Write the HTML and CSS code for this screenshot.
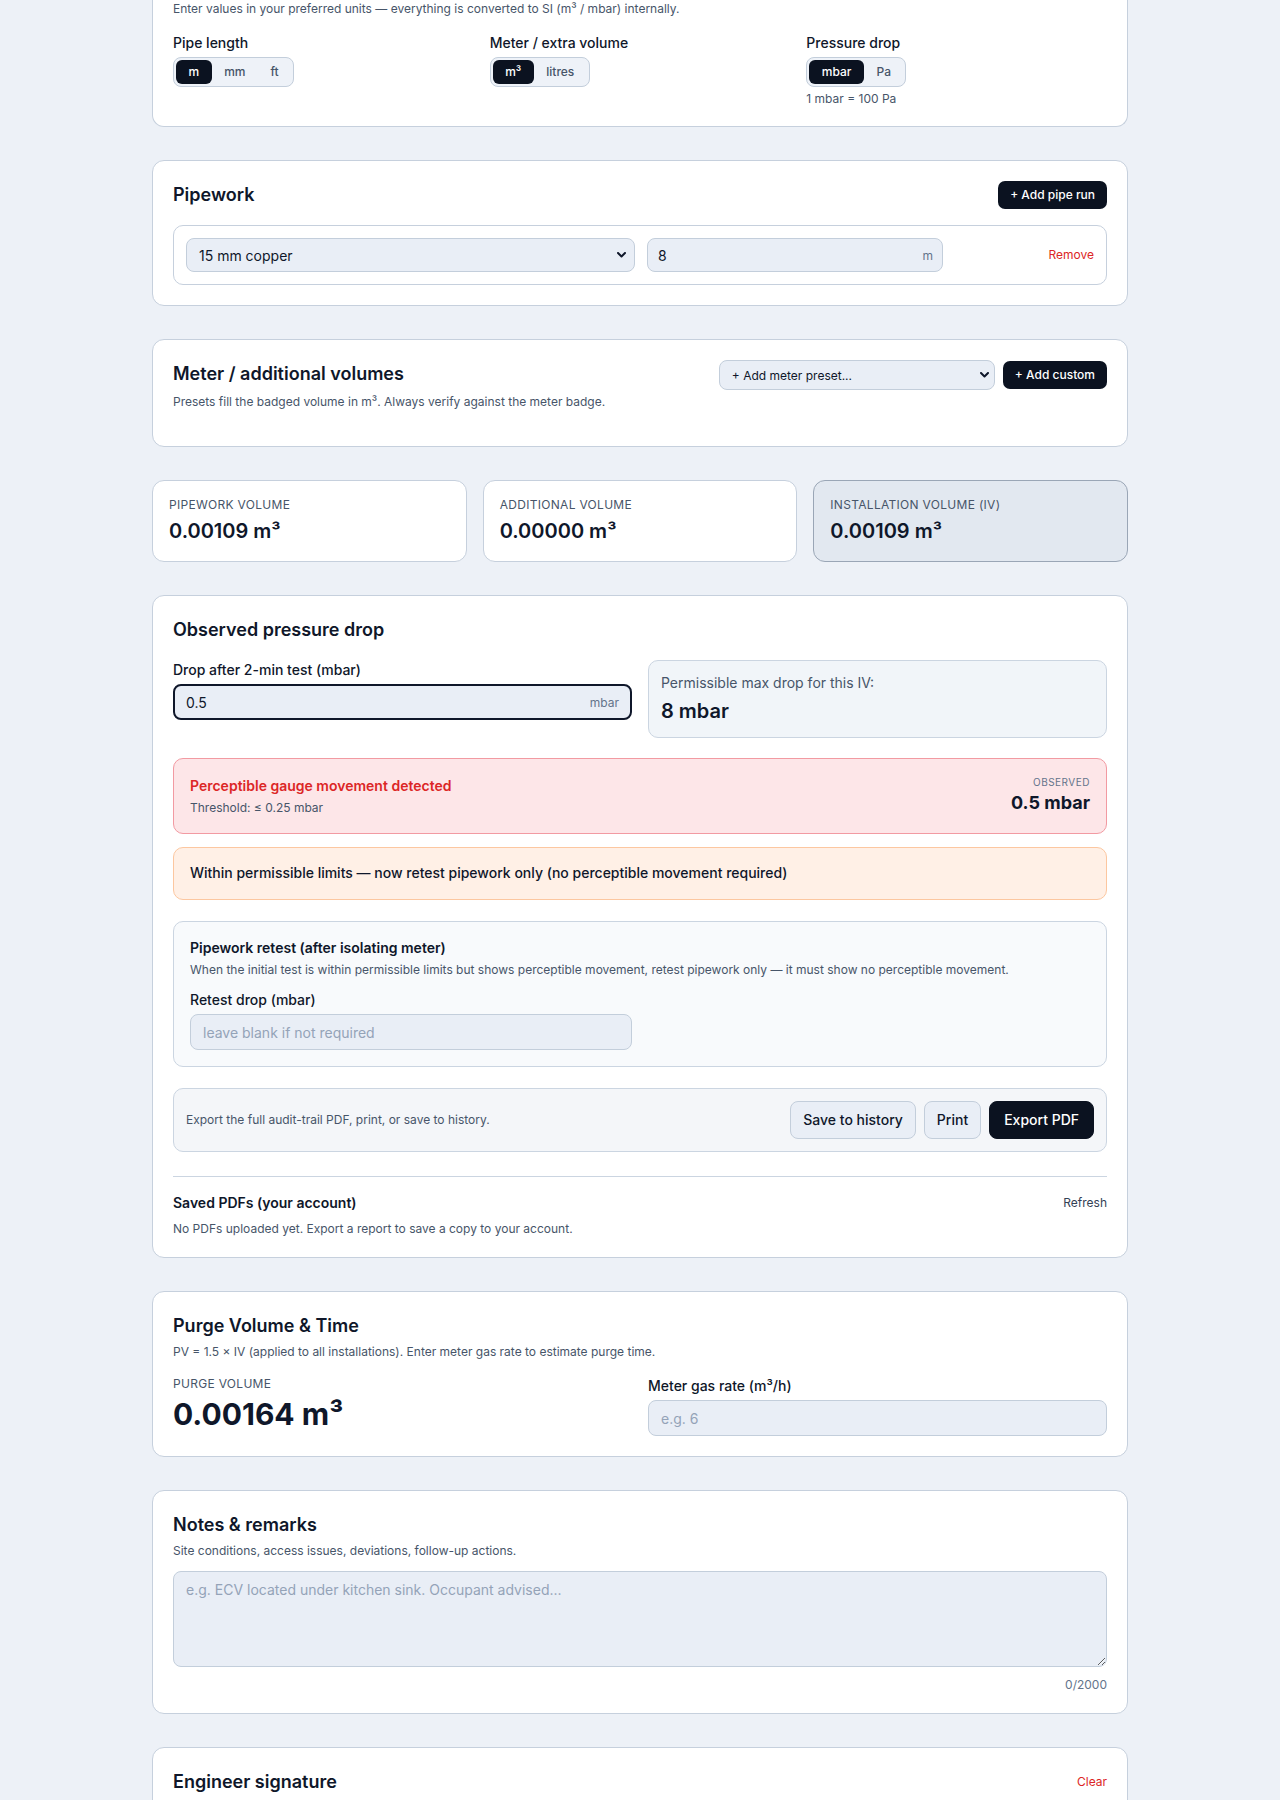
FILE: index.html
```html
<!DOCTYPE html>
<html lang="en">
<head>
<meta charset="utf-8">
<title>Gas tightness test</title>
<link rel="stylesheet" href="styles.css">
</head>
<body>
<main class="page">

  <!-- Units (continued from above the fold) -->
  <section class="card card--cut">
    <p class="note note--flush">Enter values in your preferred units — everything is converted to SI (m³ / mbar) internally.</p>
    <div class="unit-grid">
      <div>
        <span class="field-label">Pipe length</span>
        <div class="seg">
          <button class="seg-btn is-active">m</button>
          <button class="seg-btn">mm</button>
          <button class="seg-btn">ft</button>
        </div>
      </div>
      <div>
        <span class="field-label">Meter / extra volume</span>
        <div class="seg">
          <button class="seg-btn is-active">m³</button>
          <button class="seg-btn">litres</button>
        </div>
      </div>
      <div>
        <span class="field-label">Pressure drop</span>
        <div class="seg">
          <button class="seg-btn is-active">mbar</button>
          <button class="seg-btn">Pa</button>
        </div>
        <p class="hint">1 mbar = 100 Pa</p>
      </div>
    </div>
  </section>

  <!-- Pipework runs -->
  <section class="card">
    <div class="card-head">
      <h2 class="title">Pipework</h2>
      <button class="btn-dark-sm">+ Add pipe run</button>
    </div>
    <div class="pipe-row">
      <div class="select-shell">
        <select class="control control--select">
          <option>15 mm copper</option>
          <option>22 mm copper</option>
          <option>28 mm copper</option>
        </select>
        <svg class="chevron" width="9" height="6" viewBox="0 0 9 6" aria-hidden="true"><path d="M1 1l3.5 3.5L8 1" fill="none" stroke="#0f172a" stroke-width="2" stroke-linecap="round" stroke-linejoin="round"/></svg>
      </div>
      <label class="input-shell">
        <input type="text" value="8">
        <span class="suffix">m</span>
      </label>
      <button class="link-danger">Remove</button>
    </div>
  </section>

  <!-- Meter / additional volumes -->
  <section class="card">
    <div class="card-head card-head--top">
      <div>
        <h2 class="title">Meter / additional volumes</h2>
        <p class="note note--loose">Presets fill the badged volume in m³. Always verify against the meter badge.</p>
      </div>
      <div class="head-actions">
        <div class="select-shell select-shell--sm">
          <select class="control control--sm">
            <option>+ Add meter preset...</option>
            <option>U6 / G4 meter</option>
            <option>U16 / G10 meter</option>
          </select>
          <svg class="chevron chevron--sm" width="9" height="6" viewBox="0 0 9 6" aria-hidden="true"><path d="M1 1l3.5 3.5L8 1" fill="none" stroke="#0f172a" stroke-width="2" stroke-linecap="round" stroke-linejoin="round"/></svg>
        </div>
        <button class="btn-dark-sm">+ Add custom</button>
      </div>
    </div>
    <div class="volume-list"></div>
  </section>

  <!-- Volume totals -->
  <section class="stats">
    <div class="stat">
      <div class="stat-label">Pipework volume</div>
      <div class="stat-value">0.00109 m³</div>
    </div>
    <div class="stat">
      <div class="stat-label">Additional volume</div>
      <div class="stat-value">0.00000 m³</div>
    </div>
    <div class="stat stat--total">
      <div class="stat-label">Installation volume (IV)</div>
      <div class="stat-value">0.00109 m³</div>
    </div>
  </section>

  <!-- Observed pressure drop -->
  <section class="card">
    <h2 class="title">Observed pressure drop</h2>
    <div class="two-col two-col--gap">
      <div>
        <span class="field-label">Drop after 2-min test (mbar)</span>
        <label class="input-shell input-shell--lg input-shell--focus">
          <input type="text" value="0.5">
          <span class="suffix">mbar</span>
        </label>
      </div>
      <div class="limit-box">
        <div class="limit-label">Permissible max drop for this IV:</div>
        <div class="limit-value">8 mbar</div>
      </div>
    </div>

    <div class="alert alert--fail">
      <div>
        <div class="alert-title">Perceptible gauge movement detected</div>
        <div class="alert-sub">Threshold: ≤ 0.25 mbar</div>
      </div>
      <div class="alert-side">
        <div class="alert-kicker">Observed</div>
        <div class="alert-value">0.5 mbar</div>
      </div>
    </div>

    <div class="alert alert--warn">Within permissible limits — now retest pipework only (no perceptible movement required)</div>

    <div class="panel">
      <div class="panel-title">Pipework retest (after isolating meter)</div>
      <p class="note">When the initial test is within permissible limits but shows perceptible movement, retest pipework only — it must show no perceptible movement.</p>
      <div class="two-col two-col--mt12">
        <div>
          <span class="field-label">Retest drop (mbar)</span>
          <input class="control control--lg" type="text" placeholder="leave blank if not required">
        </div>
      </div>
    </div>

    <div class="export-bar">
      <span class="export-text">Export the full audit-trail PDF, print, or save to history.</span>
      <div class="export-actions">
        <button class="btn btn-light">Save to history</button>
        <button class="btn btn-light">Print</button>
        <button class="btn btn-primary">Export PDF</button>
      </div>
    </div>

    <div class="saved">
      <div class="saved-head">
        <span class="saved-title">Saved PDFs (your account)</span>
        <button class="link-plain">Refresh</button>
      </div>
      <p class="note note--gap8">No PDFs uploaded yet. Export a report to save a copy to your account.</p>
    </div>
  </section>

  <!-- Purge -->
  <section class="card">
    <h2 class="title">Purge Volume &amp; Time</h2>
    <p class="note">PV = 1.5 × IV (applied to all installations). Enter meter gas rate to estimate purge time.</p>
    <div class="two-col two-col--gap16">
      <div>
        <div class="stat-label">Purge volume</div>
        <div class="purge-value">0.00164 m³</div>
      </div>
      <div>
        <span class="field-label">Meter gas rate (m³/h)</span>
        <input class="control control--lg" type="text" placeholder="e.g. 6">
      </div>
    </div>
  </section>

  <!-- Notes -->
  <section class="card">
    <h2 class="title">Notes &amp; remarks</h2>
    <p class="note">Site conditions, access issues, deviations, follow-up actions.</p>
    <textarea class="notes" placeholder="e.g. ECV located under kitchen sink. Occupant advised..."></textarea>
    <div class="counter">0/2000</div>
  </section>

  <!-- Signature -->
  <section class="card">
    <div class="card-head">
      <h2 class="title">Engineer signature</h2>
      <button class="link-danger">Clear</button>
    </div>
    <div class="sig-pad"></div>
  </section>

</main>
</body>
</html>
```
FILE: styles.css
```css
:root {
  --bg: #edf1f7;
  --ink: #0f172a;
  --muted: #475569;
  --soft: #64748b;
  --line: #c6d0dd;
  --field: #e9eef6;
  --field-line: #c3cedb;
  --dark: #0b1220;
  --red: #dc2626;
}

* { box-sizing: border-box; }

body {
  margin: 0;
  background: var(--bg);
  color: var(--ink);
  font-family: Inter, "Noto Sans", "Liberation Sans", sans-serif;
}

button, input, select, textarea { font-family: inherit; color: inherit; }
button { cursor: pointer; }

.page {
  max-width: 976px;
  margin: 0 auto;
  padding-bottom: 48px;
  display: flex;
  flex-direction: column;
  gap: 33px;
}

/* cards */
.card {
  background: #fff;
  border: 1px solid var(--line);
  border-radius: 12px;
  padding: 20px;
}
.card--cut {
  border-top: 0;
  border-radius: 0 0 12px 12px;
  padding-top: 1px;
  padding-bottom: 19px;
}

.title {
  margin: 0;
  font-size: 18px;
  line-height: 28px;
  font-weight: 600;
}

.note {
  margin: 4px 0 0;
  font-size: 12px;
  line-height: 16px;
  color: var(--muted);
}
.note--flush { margin-top: 0; }
.note--loose { margin-top: 6px; }
.note--gap8 { margin-top: 8px; }

.card-head {
  display: flex;
  justify-content: space-between;
  align-items: center;
}
.card-head--top { align-items: flex-start; }

.head-actions {
  display: flex;
  align-items: center;
  gap: 8px;
}

.field-label {
  display: block;
  font-size: 14px;
  line-height: 20px;
  font-weight: 500;
}

/* unit toggles */
.unit-grid {
  margin-top: 16px;
  display: grid;
  grid-template-columns: repeat(3, 1fr);
  gap: 16px;
}

.seg {
  display: inline-flex;
  margin-top: 4px;
  padding: 2px;
  border: 1px solid var(--field-line);
  background: #eef2f8;
  border-radius: 8px;
}
.seg-btn {
  border: 0;
  background: transparent;
  color: var(--muted);
  font-size: 12px;
  line-height: 16px;
  font-weight: 500;
  padding: 4px 12.5px;
  border-radius: 6px;
}
.seg-btn.is-active {
  background: var(--dark);
  color: #fff;
}

.hint {
  margin: 4px 0 0;
  font-size: 12px;
  line-height: 16px;
  color: var(--muted);
}

/* buttons */
.btn-dark-sm {
  border: 0;
  background: var(--dark);
  color: #fff;
  font-size: 12px;
  line-height: 16px;
  font-weight: 500;
  padding: 6px 12px;
  border-radius: 7px;
}

.btn {
  font-size: 14px;
  line-height: 20px;
  font-weight: 500;
  padding: 8px 12px;
  border-radius: 8px;
  border: 1px solid var(--field-line);
}
.btn-light { background: var(--field); color: var(--ink); }
.btn-primary {
  background: var(--dark);
  border-color: var(--dark);
  color: #fff;
  padding: 8px 14px;
}

.link-danger {
  border: 0;
  background: none;
  padding: 0;
  color: var(--red);
  font-size: 12px;
  line-height: 16px;
  justify-self: end;
}
.link-plain {
  border: 0;
  background: none;
  padding: 0;
  font-size: 12px;
  line-height: 16px;
  color: #334155;
}

/* form controls */
.control {
  width: 100%;
  height: 34px;
  padding: 0 12px;
  border: 1px solid var(--field-line);
  background-color: var(--field);
  border-radius: 8px;
  font-size: 14px;
  color: var(--ink);
  outline: none;
}
.control::placeholder { color: #94a3b8; }
.control--lg {
  height: 36px;
  margin-top: 4px;
}

/* selects draw their own chevron on top of the field */
.select-shell {
  position: relative;
}
.select-shell select {
  appearance: none;
  -webkit-appearance: none;
  display: block;
}
.control--select {
  padding: 0 32px 0 12px;
}
.control--sm {
  width: 276px;
  height: 30px;
  font-size: 12px;
  padding: 0 28px 0 12px;
}
.chevron {
  position: absolute;
  right: 9px;
  top: 50%;
  margin-top: -3px;
  pointer-events: none;
}
.chevron--sm { right: 6px; }

.input-shell {
  display: flex;
  align-items: center;
  height: 34px;
  padding: 0 9px 0 10px;
  border: 1px solid var(--field-line);
  background: var(--field);
  border-radius: 8px;
}
.input-shell input {
  flex: 1;
  min-width: 0;
  border: 0;
  padding: 0;
  background: transparent;
  font-size: 14px;
  outline: none;
}
.input-shell--lg {
  height: 36px;
  margin-top: 4px;
}
.input-shell--focus {
  border: 2px solid var(--ink);
  padding: 0 11px;
}
.suffix {
  font-size: 12px;
  color: var(--soft);
}

/* pipework row */
.pipe-row {
  margin-top: 16px;
  padding: 12px;
  border: 1px solid var(--line);
  border-radius: 10px;
  display: grid;
  grid-template-columns: minmax(0, 449fr) minmax(0, 296fr) minmax(0, 139fr);
  gap: 12px;
  align-items: center;
}

.volume-list { margin-top: 16px; }

/* totals */
.stats {
  display: grid;
  grid-template-columns: repeat(3, 1fr);
  gap: 16px;
}
.stat {
  background: #fff;
  border: 1px solid var(--line);
  border-radius: 12px;
  padding: 16px;
}
.stat--total {
  background: #e2e8f0;
  border-color: #9aa6b6;
}
.stat-label {
  font-size: 12px;
  line-height: 16px;
  text-transform: uppercase;
  letter-spacing: 0.025em;
  color: var(--muted);
}
.stat-value {
  margin-top: 4px;
  font-size: 20px;
  line-height: 28px;
  font-weight: 600;
}

/* pressure section */
.two-col {
  display: grid;
  grid-template-columns: 1fr 1fr;
  gap: 16px;
  align-items: start;
}
.two-col--gap { margin-top: 16px; }
.two-col--gap16 { margin-top: 16px; }
.two-col--mt12 { margin-top: 12px; }

.limit-box {
  background: #f1f5f9;
  border: 1px solid #cbd5e1;
  border-radius: 10px;
  padding: 12px;
}
.limit-label {
  font-size: 14px;
  line-height: 20px;
  color: var(--muted);
}
.limit-value {
  margin-top: 4px;
  font-size: 20px;
  line-height: 28px;
  font-weight: 600;
}

.alert {
  border-radius: 10px;
  padding: 16px;
  border: 1px solid;
}
.alert--fail {
  margin-top: 20px;
  display: flex;
  justify-content: space-between;
  align-items: center;
  background: #fde6e8;
  border-color: #f29aa2;
}
.alert--warn {
  margin-top: 13px;
  padding: 15px 16px 16px;
  background: #fff0e6;
  border-color: #fcc7a0;
  font-size: 14px;
  line-height: 20px;
  font-weight: 500;
}
.alert-title {
  font-size: 14px;
  line-height: 20px;
  font-weight: 600;
  color: var(--red);
}
.alert-sub {
  margin-top: 4px;
  font-size: 12px;
  line-height: 16px;
  color: var(--muted);
}
.alert-side { text-align: right; }
.alert-kicker {
  font-size: 10px;
  line-height: 14px;
  text-transform: uppercase;
  letter-spacing: 0.05em;
  color: var(--soft);
}
.alert-value {
  font-size: 18px;
  line-height: 28px;
  font-weight: 700;
}

.panel {
  margin-top: 21px;
  padding: 16px;
  background: #f8fafc;
  border: 1px solid #cbd5e1;
  border-radius: 10px;
}
.panel-title {
  font-size: 14px;
  line-height: 20px;
  font-weight: 600;
}

.export-bar {
  margin-top: 21px;
  padding: 12px;
  display: flex;
  justify-content: space-between;
  align-items: center;
  background: #f4f6f9;
  border: 1px solid #cbd5e1;
  border-radius: 10px;
}
.export-text {
  font-size: 12px;
  line-height: 16px;
  color: var(--muted);
}
.export-actions {
  display: flex;
  gap: 8px;
}

.saved {
  margin-top: 24px;
  padding-top: 16px;
  border-top: 1px solid #cbd5e1;
}
.saved-head {
  display: flex;
  justify-content: space-between;
  align-items: center;
}
.saved-title {
  font-size: 14px;
  line-height: 20px;
  font-weight: 600;
}

/* purge */
.purge-value {
  margin-top: 4px;
  font-size: 30px;
  line-height: 36px;
  font-weight: 700;
}

/* notes */
.notes {
  display: block;
  width: 100%;
  height: 96px;
  margin-top: 12px;
  padding: 8px 12px;
  border: 1px solid var(--field-line);
  background: var(--field);
  border-radius: 8px;
  font-size: 14px;
  line-height: 20px;
  resize: vertical;
  outline: none;
}
.notes::placeholder { color: #94a3b8; }
.counter {
  margin-top: 10px;
  text-align: right;
  font-size: 12px;
  line-height: 16px;
  color: var(--soft);
}

/* signature */
.sig-pad {
  margin-top: 16px;
  height: 200px;
  border: 1px dashed var(--field-line);
  background: #f8fafc;
  border-radius: 10px;
}
```
